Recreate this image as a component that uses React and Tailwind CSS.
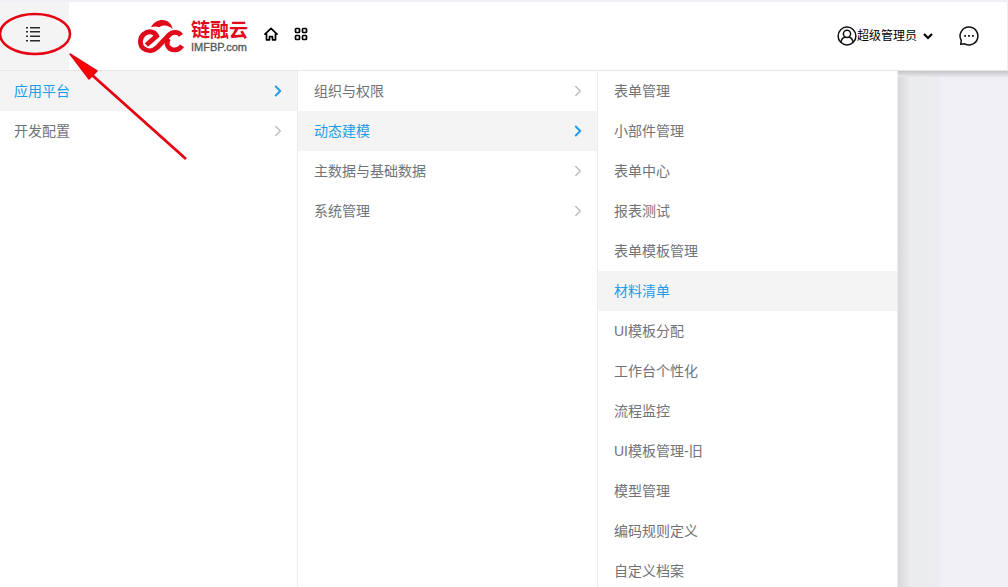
import React, { useState } from "react";
import { ChevronRight } from "lucide-react";

const modules = ["应用平台", "开发配置"];

const groups = ["组织与权限", "动态建模", "主数据与基础数据", "系统管理"];

const pages = [
  "表单管理",
  "小部件管理",
  "表单中心",
  "报表测试",
  "表单模板管理",
  "材料清单",
  "UI模板分配",
  "工作台个性化",
  "流程监控",
  "UI模板管理-旧",
  "模型管理",
  "编码规则定义",
  "自定义档案",
];

const ListIcon = () => (
  <svg width="16" height="16" viewBox="0 0 16 16" fill="#2b2b30" aria-hidden="true">
    <path d="M1 1h2v1.500H1zM1 5h2v1.500H1zM1 9.500h2V11H1zM1 14h2v1.500H1zM5 1h10v1.500H5zM5 5h10v1.500H5zM5 9.500h10V11H5zM5 14h10v1.500H5z" />
  </svg>
);

const HomeIcon = () => (
  <svg width="14" height="14" viewBox="0 0 14 14" fill="none" stroke="#000" strokeWidth="1.7" strokeLinejoin="round" strokeLinecap="round" aria-hidden="true">
    <path d="M1 7.200 7 1.300l6 5.900M2.500 7.200v5.600h3V9.600h3v3.200h3V7.200" />
  </svg>
);

const GridIcon = () => (
  <svg width="14" height="14" viewBox="0 0 14 14" fill="none" stroke="#000" strokeWidth="1.7" aria-hidden="true">
    <rect x="1.500" y="1.500" width="4" height="4" rx="0.8" />
    <rect x="8.500" y="1.500" width="4" height="4" rx="0.8" />
    <rect x="1.500" y="8.500" width="4" height="4" rx="0.8" />
    <rect x="8.500" y="8.500" width="4" height="4" rx="0.8" />
  </svg>
);

const UserIcon = () => (
  <svg width="20" height="20" viewBox="0 0 20 20" fill="none" stroke="#111" strokeWidth="1.5" aria-hidden="true">
    <circle cx="10" cy="10" r="8.9" />
    <circle cx="10" cy="7.8" r="3.6" />
    <path d="M4 16.2c.5-3 2.2-4.7 4.2-5.1M16 16.2c-.5-3-2.2-4.7-4.2-5.1" />
  </svg>
);

const MessageIcon = () => (
  <svg width="20" height="20" viewBox="0 0 20 20" fill="none" stroke="#111" strokeWidth="1.5" aria-hidden="true">
    <path d="M10 1.100a8.900 8.900 0 1 1-4.300 16.700L1.700 18.300l.6-3.800A8.900 8.900 0 0 1 10 1.100z" strokeLinejoin="round" />
    <path d="M5.200 9.800h1.800M9.100 9.800h1.800M13 9.800h1.800" strokeWidth="1.8" />
  </svg>
);

const Logo = () => (
  <a href="#home" className="flex items-center gap-1.5 pt-0.5">
    <svg width="47" height="34" viewBox="0 0 141 102" fill="none" stroke="#e00a1b" strokeWidth="14.5" aria-hidden="true">
      <path d="M39 22C46 6 60 0 73 0c18 0 28 12 31 27-12-11-28-14-41-5-8-4-16-3-24 0z" fill="#e00a1b" stroke="none" />
      <path d="M25 75 56 48C50 34 31 31 18 42 4 53 4 75 16 85c14 11 31 8 43-4L93 45c10-11 28-10 36 1" />
      <path d="M132 77c-11 18-38 16-44-2-2-7-1-12 4-19" />
    </svg>
    <span className="flex flex-col">
      <span className="text-[19px] leading-5 font-bold text-[#e00a1b]">链融云</span>
      <span className="text-[11px] leading-3 font-normal text-[#555] [-webkit-text-stroke:0.3px_#555]">IMFBP.com</span>
    </span>
  </a>
);

const MenuColumn = ({ label, items, active, onSelect, arrows, className, itemClassName }) => (
  <nav aria-label={label} className={`shrink-0 overflow-hidden border-r border-[#ececec] bg-white ${className}`}>
    {items.map((item) => (
      <button
        key={item}
        type="button"
        onClick={() => onSelect(item)}
        className={`flex h-10 w-full items-center justify-between pr-2.5 text-sm ${itemClassName} ${
          item === active ? "bg-[#f4f4f4] text-[#1e9be9]" : "text-[#707378]"
        }`}
      >
        <span>{item}</span>
        {arrows && (
          <ChevronRight
            size={18}
            strokeWidth={item === active ? 2.5 : 2}
            className={item === active ? "text-[#1e9be9]" : "text-[#bdbdbd]"}
          />
        )}
      </button>
    ))}
  </nav>
);

// Red ellipse round the menu button and the arrow that points to it
const MenuHint = () => (
  <svg className="pointer-events-none absolute top-0 left-0" width="200" height="170" viewBox="0 0 200 170" aria-hidden="true">
    <ellipse cx="35" cy="34" rx="35" ry="20" fill="none" stroke="#e60012" strokeWidth="2.5" />
    <path d="M92 75 186 159" stroke="#e60012" strokeWidth="2.8" />
    <path d="M70 54 97 71 89 79z" fill="#f00" stroke="#e60012" strokeWidth="1.5" strokeLinejoin="round" />
  </svg>
);

const App = () => {
  const [module, setModule] = useState("应用平台");
  const [group, setGroup] = useState("动态建模");
  const [page, setPage] = useState("材料清单");

  return (
    <div className="relative flex h-screen flex-col overflow-hidden bg-[#efeff5] font-['Liberation_Sans','Noto_Sans_CJK_SC',sans-serif]">
      <header className="mt-0.5 mr-px flex h-[69px] shrink-0 items-center border-b border-[#e6e6e6] bg-white">
        <button type="button" aria-label="菜单" className="flex h-full w-[69px] items-center justify-center bg-[#f4f4f4] pr-1 pb-1">
          <ListIcon />
        </button>
        <div className="flex items-center pl-[69px]">
          <Logo />
          <a href="#home" aria-label="首页" className="ml-4 pb-1">
            <HomeIcon />
          </a>
          <a href="#apps" aria-label="应用" className="ml-4 pb-1">
            <GridIcon />
          </a>
        </div>
        <div className="ml-auto flex items-center gap-[26px] pr-7">
          <button type="button" className="flex items-center text-xs text-black">
            <UserIcon />
            <span>超级管理员</span>
            <svg className="ml-1.5" width="10" height="10" viewBox="0 0 10 10" fill="none" stroke="#000" strokeWidth="2.2" aria-hidden="true">
              <path d="M1 3l4 4 4-4" />
            </svg>
          </button>
          <button type="button" aria-label="消息">
            <MessageIcon />
          </button>
        </div>
      </header>

      <main className="flex min-h-0 flex-1">
        <MenuColumn label="模块" items={modules} active={module} onSelect={setModule} arrows className="w-[298px]" itemClassName="pl-3.5" />
        <MenuColumn label="分组" items={groups} active={group} onSelect={setGroup} arrows className="w-[300px]" itemClassName="pl-4" />
        <MenuColumn label="页面" items={pages} active={page} onSelect={setPage} className="w-[300px]" itemClassName="pl-4" />
        <div className="flex flex-1 flex-col">
          <div className="h-1.5 bg-linear-to-b from-[#c4c4c8] to-[#e9e9ee]" />
          <div className="w-[42px] flex-1 bg-linear-to-r from-[#d9d8dc] via-[#ebecee] via-30% to-[#ecedef]" />
        </div>
      </main>

      <MenuHint />
    </div>
  );
};

export default App;
